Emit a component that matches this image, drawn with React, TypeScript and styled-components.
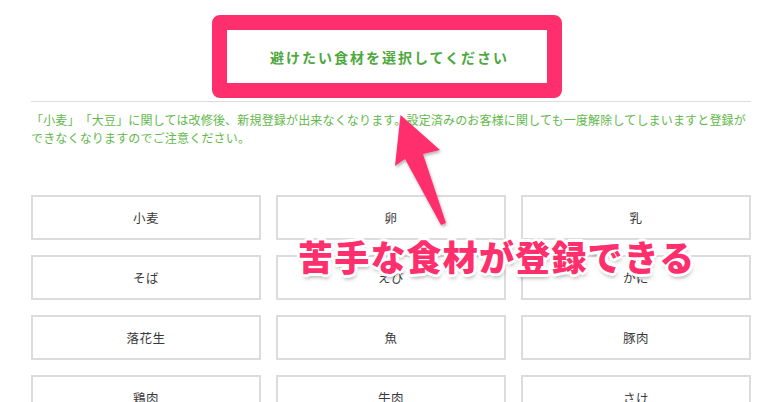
import React from "react";
import styled, { createGlobalStyle } from "styled-components";

const Global = createGlobalStyle`
  html, body { margin: 0; padding: 0; background: #fff; overflow: hidden; }
  body { font-family: "Noto Sans CJK JP", "Noto Sans", sans-serif; }
`;

const Page = styled.div`
  position: relative;
  width: 784px;
  height: 402px;
  overflow: hidden;
  padding: 0 33px 0 31px;
  box-sizing: border-box;
`;

const Header = styled.div`
  display: flex;
  padding: 15px 0 0 181px;
  height: 102px;
  box-sizing: border-box;
  border-bottom: 1px solid #dcdcdc;
`;

const TitleFrame = styled.div`
  width: 350px;
  height: 83px;
  box-sizing: border-box;
  border: 15px solid #ff2e6c;
  border-radius: 8px;
  background: #fff;
  display: flex;
  align-items: center;
  justify-content: center;
  padding-left: 5px;
`;

const Title = styled.h1`
  margin: 0;
  font-size: 14px;
  font-weight: 700;
  letter-spacing: 2px;
  color: #4ea83e;
`;

const Note = styled.p`
  margin: 9px 0 0;
  font-size: 12px;
  line-height: 17.5px;
  letter-spacing: 0.17px;
  text-spacing-trim: space-all;
  color: #62b84a;
`;

const Grid = styled.div`
  display: grid;
  grid-template-columns: repeat(3, 230px);
  column-gap: 15px;
  row-gap: 15px;
  margin-top: 49px;
`;

const Item = styled.button`
  height: 45px;
  box-sizing: border-box;
  border: 2px solid #dcdcdc;
  background: #fff;
  font-family: "Noto Sans CJK JP", sans-serif;
  font-size: 12.5px;
  color: #3a3a3a;
  letter-spacing: 0.5px;
  padding: 0;
`;

const Arrow = styled.svg`
  position: absolute;
  left: 380px;
  top: 100px;
  overflow: visible;
`;

const Callout = styled.div`
  position: absolute;
  left: 298px;
  top: 234px;
  font-size: 35px;
  line-height: 44px;
  font-weight: 900;
  letter-spacing: 1.2px;
  color: #ff2e6c;
  white-space: nowrap;
  text-shadow:
    2px 0 0 #fff, -2px 0 0 #fff, 0 2px 0 #fff, 0 -2px 0 #fff,
    2px 2px 0 #fff, -2px -2px 0 #fff, 2px -2px 0 #fff, -2px 2px 0 #fff,
    3px 0 0 #fff, -3px 0 0 #fff, 0 3px 0 #fff, 0 -3px 0 #fff,
    1px 4px 4px rgba(0, 0, 0, 0.35);
`;

const foods = ["小麦", "卵", "乳", "そば", "えび", "かに", "落花生", "魚", "豚肉", "鶏肉", "牛肉", "さけ"];

export default function App() {
  return (
    <>
      <Global />
      <Page>
        <Header>
          <TitleFrame>
            <Title>避けたい食材を選択してください</Title>
          </TitleFrame>
        </Header>
        <Note>
          「小麦」「大豆」に関しては改修後、新規登録が出来なくなります。設定済みのお客様に関しても一度解除してしまいますと登録ができなくなりますのでご注意ください。
        </Note>
        <Grid>
          {foods.map((f) => (
            <Item key={f}>{f}</Item>
          ))}
        </Grid>
        <Arrow width="80" height="140" viewBox="0 0 80 140">
          <defs>
            <filter id="sh" x="-30%" y="-30%" width="160%" height="160%">
              <feDropShadow dx="1" dy="2" stdDeviation="1.5" floodColor="#000" floodOpacity="0.3" />
            </filter>
          </defs>
          <polygon
            points="20.5,15 60,50 43,54 66,123 61,125 25,59 15,66"
            fill="#ff2e6c"
            filter="url(#sh)"
          />
        </Arrow>
        <Callout>苦手な食材が登録できる</Callout>
      </Page>
    </>
  );
}
